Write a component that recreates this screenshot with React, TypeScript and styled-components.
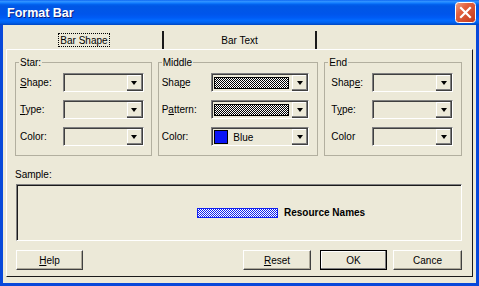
import React from "react";
import styled, { createGlobalStyle } from "styled-components";

type Value = "empty" | "pattern" | "color";

interface Field {
  label: React.ReactNode;
  value: Value;
}

interface GroupDef {
  title: string;
  width: number;
  padL: number;
  padR: number;
  combo: number;
  fields: Field[];
}

const groups: GroupDef[] = [
  {
    title: "Star:",
    width: 137,
    padL: 4,
    padR: 7,
    combo: 81,
    fields: [
      { label: <><u>S</u>hape:</>, value: "empty" },
      { label: <><u>T</u>ype:</>, value: "empty" },
      { label: "Color:", value: "empty" },
    ],
  },
  {
    title: "Middle",
    width: 161,
    padL: 3,
    padR: 8,
    combo: 98,
    fields: [
      { label: <>Sha<u>p</u>e</>, value: "pattern" },
      { label: <>P<u>a</u>ttern:</>, value: "pattern" },
      { label: "Color:", value: "color" },
    ],
  },
  {
    title: "End",
    width: 138,
    padL: 6,
    padR: 8,
    combo: 81,
    fields: [
      { label: <>Shap<u>e</u>:</>, value: "empty" },
      { label: <>T<u>y</u>pe:</>, value: "empty" },
      { label: "Color", value: "empty" },
    ],
  },
];

const CloseIcon = () => (
  <svg width="21" height="21" viewBox="0 0 21 21">
    <defs>
      <linearGradient id="cls" x1="0" y1="0" x2="1" y2="1">
        <stop offset="0" stopColor="#f0a48c" />
        <stop offset="0.35" stopColor="#e2613f" />
        <stop offset="1" stopColor="#c2371a" />
      </linearGradient>
    </defs>
    <rect x="0.5" y="0.5" width="20" height="20" rx="3" fill="url(#cls)" stroke="#fff" />
    <path d="M6 6 L15 15 M15 6 L6 15" stroke="#fff" strokeWidth="2.2" strokeLinecap="square" />
  </svg>
);

export default function App() {
  const renderValue = (v: Value) => {
    if (v === "pattern") return <PatternSwatch />;
    if (v === "color")
      return (
        <>
          <ColorSwatch />
          <ComboText>Blue</ComboText>
        </>
      );
    return null;
  };

  return (
    <>
      <GlobalStyle />
      <Window>
        <TitleBar>
          <Title>Format Bar</Title>
          <CloseIcon />
        </TitleBar>
        <Frame>
          <TabStrip>
            <Tab $width={158}>
              <TabLabel $focused>Bar Shape</TabLabel>
            </Tab>
            <Tab $width={153}>
              <TabLabel>Bar Text</TabLabel>
            </Tab>
          </TabStrip>
          <Page>
            <GroupRow>
              {groups.map((g) => (
                <Group key={g.title} $width={g.width}>
                  <Legend>{g.title}</Legend>
                  <GroupGrid $padL={g.padL} $padR={g.padR} $combo={g.combo}>
                    {g.fields.map((f, i) => (
                      <React.Fragment key={i}>
                        <FieldLabel>{f.label}</FieldLabel>
                        <Combo>
                          <ComboValue>{renderValue(f.value)}</ComboValue>
                          <ComboButton>
                            <Arrow />
                          </ComboButton>
                        </Combo>
                      </React.Fragment>
                    ))}
                  </GroupGrid>
                </Group>
              ))}
            </GroupRow>
            <SampleLabel>Sample:</SampleLabel>
            <SampleBox>
              <SampleBar />
              <SampleText>Resource Names</SampleText>
            </SampleBox>
            <ButtonRow>
              <Button $width={67}>
                <u>H</u>elp
              </Button>
              <Spacer />
              <Button $width={68}>
                <u>R</u>eset
              </Button>
              <Button $width={67} $default>
                OK
              </Button>
              <Button $width={69}>Cance</Button>
            </ButtonRow>
          </Page>
        </Frame>
      </Window>
    </>
  );
}

const GlobalStyle = createGlobalStyle`
  html, body {
    margin: 0;
    padding: 0;
    background: #ece9d8;
  }
  body {
    font-family: "Liberation Sans", Arial, sans-serif;
    font-size: 10px;
    color: #000;
  }
`;

const Window = styled.div`
  width: 479px;
  height: 286px;
  display: flex;
  flex-direction: column;
  overflow: hidden;
`;

const TitleBar = styled.div`
  height: 25px;
  flex: none;
  display: flex;
  align-items: center;
  justify-content: space-between;
  padding: 0 3px 0 7px;
  box-sizing: border-box;
  background: linear-gradient(
    to bottom,
    #0058ee 0%,
    #3593ff 4%,
    #288eff 8%,
    #127dff 12%,
    #0262ee 18%,
    #0057e5 24%,
    #0055eb 56%,
    #005bf5 70%,
    #026afe 82%,
    #0062ef 90%,
    #0052d6 96%,
    #0046c0 100%
  );
`;

const Title = styled.span`
  color: #fff;
  font-family: "Liberation Sans", Arial, sans-serif;
  font-weight: bold;
  font-size: 12.5px;
  text-shadow: 1px 1px #0a1e80;
  padding-top: 1px;
`;

const Frame = styled.div`
  flex: 1;
  display: flex;
  flex-direction: column;
  background: #ece9d8;
  border: 3px solid #0848da;
  border-top: none;
  padding: 0 3px 6px 3px;
  min-height: 0;
`;

const TabStrip = styled.div`
  height: 24px;
  flex: none;
  display: flex;
  align-items: flex-start;
`;

const Tab = styled.div<{ $width: number }>`
  width: ${({ $width }) => $width}px;
  box-sizing: border-box;
  height: 18px;
  margin-top: 6px;
  display: flex;
  align-items: center;
  justify-content: center;
  border-right: 2px solid #1a1a1a;
`;

const TabLabel = styled.span<{ $focused?: boolean }>`
  padding: 1px 1px 0;
  line-height: 11px;
  border: 1px dotted ${({ $focused }) => ($focused ? "#000" : "transparent")};
`;

const Page = styled.div`
  flex: 1;
  display: flex;
  flex-direction: column;
  border-top: 1px solid #fff;
  border-left: 1px solid #fff;
  border-right: 1px solid #1a1a1a;
  border-bottom: 1px solid #1a1a1a;
  padding: 6px 10px 0 8px;
  min-height: 0;
`;

const GroupRow = styled.div`
  display: flex;
  gap: 6px;
`;

const Group = styled.fieldset`
  width: ${({ $width }: { $width: number }) => $width}px;
  box-sizing: border-box;
  margin: 0;
  padding: 0;
  min-width: 0;
  border: 1px solid #b2af9f;
`;

const Legend = styled.legend`
  margin-left: 3px;
  padding: 0 1px;
  line-height: 13px;
  font-size: 10px;
`;

const GroupGrid = styled.div<{ $padL: number; $padR: number; $combo: number }>`
  display: grid;
  grid-template-columns: 1fr ${({ $combo }) => $combo}px;
  grid-auto-rows: 19px;
  row-gap: 8px;
  align-items: center;
  padding: 4px ${({ $padR }) => $padR}px 9px ${({ $padL }) => $padL}px;
`;

const FieldLabel = styled.span`
  white-space: nowrap;
`;

const Combo = styled.div`
  height: 19px;
  box-sizing: border-box;
  display: flex;
  border-top: 1px solid #808080;
  border-left: 1px solid #808080;
  border-right: 1px solid #fff;
  border-bottom: 1px solid #fff;
  box-shadow: inset 1px 1px #404040;
  padding: 1px 0 0 1px;
`;

const ComboValue = styled.div`
  flex: 1;
  display: flex;
  align-items: center;
  gap: 5px;
  padding: 0 3px 0 1px;
  min-width: 0;
`;

const ComboText = styled.span`
  font-size: 10px;
`;

const ComboButton = styled.div`
  width: 16px;
  box-sizing: border-box;
  display: flex;
  align-items: center;
  justify-content: center;
  background: #ece9d8;
  border-right: 1px solid #404040;
  border-bottom: 1px solid #404040;
  box-shadow: inset -1px -1px #808080, inset 1px 1px #fff;
`;

const Arrow = styled.span`
  width: 0;
  height: 0;
  border-left: 3.5px solid transparent;
  border-right: 3.5px solid transparent;
  border-top: 4px solid #000;
  margin-top: 1px;
`;

const PatternSwatch = styled.div`
  flex: 1;
  height: 12px;
  box-sizing: border-box;
  border: 1px solid #000;
  background: repeating-conic-gradient(#000 0 25%, #fff 0 50%) 0 0 / 2px 2px;
`;

const ColorSwatch = styled.div`
  width: 14px;
  height: 14px;
  box-sizing: border-box;
  border: 1px solid #000;
  background: #0a14f5;
  flex: none;
`;

const SampleLabel = styled.div`
  line-height: 13px;
  margin-top: 12px;
`;

const SampleBox = styled.div`
  margin: 3px 0 0 1px;
  height: 57px;
  box-sizing: border-box;
  display: flex;
  align-items: center;
  border-top: 1px solid #808080;
  border-left: 1px solid #808080;
  border-right: 1px solid #fff;
  border-bottom: 1px solid #fff;
  box-shadow: inset 1px 1px #1a1a1a;
  padding-left: 180px;
`;

const SampleBar = styled.div`
  width: 81px;
  height: 10px;
  box-sizing: border-box;
  border: 1px solid #1020f0;
  background: repeating-conic-gradient(#1020f0 0 25%, #fff 0 50%) 0 0 / 2px 2px;
`;

const SampleText = styled.span`
  margin-left: 6px;
  font-weight: bold;
  font-size: 10px;
`;

const ButtonRow = styled.div`
  display: flex;
  margin: 9px 0 0 1px;
  gap: 9px;
  & > :last-child {
    margin-left: -3px;
  }
`;

const Spacer = styled.div`
  flex: 1;
`;

const Button = styled.div<{ $width: number; $default?: boolean }>`
  width: ${({ $width }) => $width}px;
  height: 20px;
  box-sizing: border-box;
  display: flex;
  align-items: center;
  justify-content: center;
  background: #ece9d8;
  border: 1px solid;
  border-color: ${({ $default }) =>
    $default ? "#000" : "#fff #404040 #404040 #fff"};
  box-shadow: ${({ $default }) =>
    $default
      ? "inset -1px -1px #808080, inset 1px 1px #fff"
      : "inset -1px -1px #aca899"};
`;
